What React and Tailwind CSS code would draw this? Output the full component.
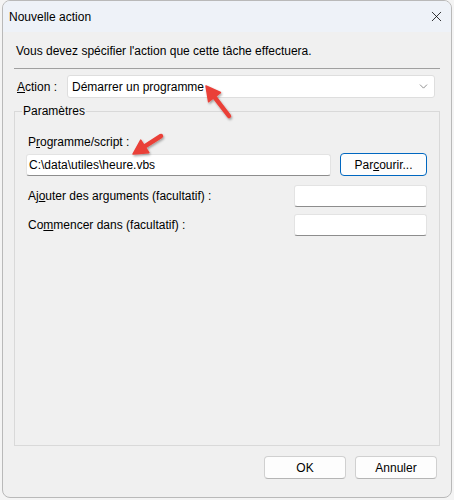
import { ChevronDown, X } from "lucide-react";

const font = { fontFamily: '"Segoe UI", "Liberation Sans", Arial, sans-serif' };

const Field = ({ className = "", children }) => (
  <div
    className={`h-[22px] bg-white border border-[#e3e3e3] border-b-[#8d8d8d] rounded-[3px] flex items-center px-[2px] ${className}`}
  >
    {children}
  </div>
);

const Btn = ({ label, primary, className = "" }) => (
  <button
    type="button"
    className={`h-[23px] rounded-[4px] bg-[#fdfdfd] text-[12px] text-black flex items-center justify-center ${
      primary ? "border border-[#0067c0]" : "border border-[#d0d0d0] border-b-[#b5b5b5]"
    } ${className}`}
  >
    {label}
  </button>
);

const Arrow = ({ x1, y1, x2, y2 }) => {
  const a = Math.atan2(y2 - y1, x2 - x1);
  const hl = 14;
  const hw = 7.5;
  const bx = x2 - hl * Math.cos(a);
  const by = y2 - hl * Math.sin(a);
  const px = -Math.sin(a) * hw;
  const py = Math.cos(a) * hw;
  return (
    <g>
      <line x1={x1} y1={y1} x2={bx} y2={by} stroke="#ea4038" strokeWidth="4.5" strokeLinecap="round" />
      <polygon
        points={`${x2},${y2} ${bx + px},${by + py} ${bx - px},${by - py}`}
        fill="#ea4038"
        stroke="#ea4038"
        strokeWidth="1.5"
        strokeLinejoin="round"
      />
    </g>
  );
};

export default function App() {
  return (
    <div className="relative w-[454px] h-[500px] bg-[#f4f4f4] overflow-hidden" style={font}>
      <div className="ml-[2px] w-[450px] h-[498px] rounded-[8px] border border-[#b9b9b9] overflow-hidden flex flex-col bg-[#f0f0f0]">
        {/* barre de titre */}
        <div className="h-[31px] shrink-0 bg-[#eef2f8] flex items-center justify-between pl-[6px] pr-[6px]">
          <span className="text-[12px] text-black">Nouvelle action</span>
          <X size={17} strokeWidth={1.1} className="text-black" />
        </div>

        <div className="flex-1 flex flex-col px-[11px] text-[12px] text-black">
          <p className="pt-[9px] pl-[2px] leading-[20px]">
            Vous devez spécifier l'action que cette tâche effectuera.
          </p>
          <div className="mt-[7px] h-px bg-[#a0a0a0]" />

          <div className="mt-[6px] flex items-center">
            <span className="w-[53px] pl-[3px]">
              <u>A</u>ction :
            </span>
            <div className="w-[368px] h-[23px] bg-white border border-[#dedede] rounded-[3px] flex items-center justify-between pl-[4px] pr-[4px]">
              <span>Démarrer un programme</span>
              <ChevronDown size={13} strokeWidth={1.2} className="text-[#555]" />
            </div>
          </div>

          <fieldset className="mt-[5px] h-[343px] border border-[#d9d9d9] pl-[11px] pr-[12px] pb-0 pt-[15px] min-w-0">
            <legend className="px-[1px] ml-[-4px] leading-[16px]">Paramètres</legend>
            <div className="leading-[16px] pl-[2px]">
              P<u>r</u>ogramme/script :
            </div>
            <div className="mt-[3px] flex items-center">
              <Field className="w-[305px]">C:\data\utiles\heure.vbs</Field>
              <Btn label={<span>Par<u>c</u>ourir...</span>} primary className="ml-[9px] w-[87px] h-[22px]" />
            </div>
            <div className="mt-[9px] flex items-center justify-between">
              <span className="pl-[2px]">
                Aj<u>o</u>uter des arguments (facultatif) :
              </span>
              <Field className="w-[133px]" />
            </div>
            <div className="mt-[7px] flex items-center justify-between">
              <span className="pl-[2px]">
                Co<u>m</u>mencer dans (facultatif) :
              </span>
              <Field className="w-[133px]" />
            </div>
          </fieldset>

          <div className="mt-[10px] flex justify-end gap-[9px] pr-[3px]">
            <Btn label="OK" className="w-[82px]" />
            <Btn label="Annuler" className="w-[82px]" />
          </div>
        </div>
      </div>

      {/* flèches d'annotation */}
      <svg className="absolute inset-0 pointer-events-none" width="454" height="500">
        <defs>
          <filter id="sh" x="-20%" y="-20%" width="140%" height="140%">
            <feDropShadow dx="1" dy="1.5" stdDeviation="1.2" floodColor="#000" floodOpacity="0.35" />
          </filter>
        </defs>
        <g filter="url(#sh)">
          <Arrow x1={229} y1={116} x2={206} y2={86} />
          <Arrow x1={161} y1={136} x2={133} y2={154} />
        </g>
      </svg>
    </div>
  );
}
